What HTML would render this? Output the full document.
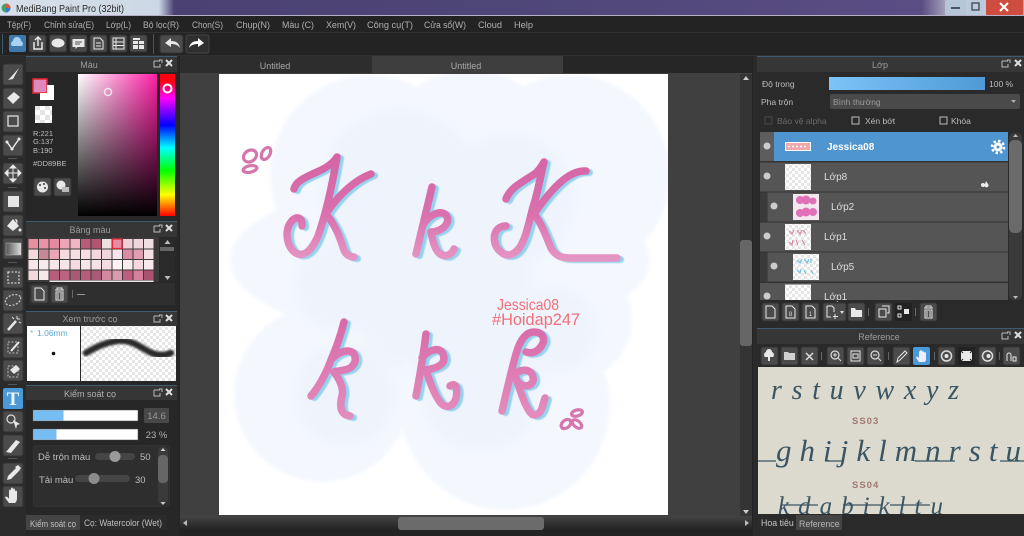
<!DOCTYPE html>
<html><head><meta charset="utf-8">
<style>
html,body{margin:0;padding:0;background:#222;width:1024px;height:536px;overflow:hidden}
svg{display:block;filter:blur(.35px)}
text{font-family:"Liberation Sans","Noto Sans CJK SC",sans-serif;font-size:9px;fill:#bdbdbd}
.m{font-size:9px;fill:#b0b0b0}
.c{text-anchor:middle}
.b{fill:#4b4b4b;stroke:#333;stroke-width:1}
.i{fill:none;stroke:#e8e8e8;stroke-width:1.5}
.w{fill:#e8e8e8}
.p{fill:none;stroke:url(#pk);stroke-width:7.5;stroke-linecap:round;stroke-linejoin:round}
.p2{fill:none;stroke:url(#pk2);stroke-width:7.5;stroke-linecap:round;stroke-linejoin:round}
.s{fill:none;stroke:#93d3f0;stroke-width:7;stroke-linecap:round;stroke-linejoin:round}
.f{fill:none;stroke:#d576ad;stroke-width:3.200}
.sc{font-family:"Liberation Serif",serif;font-style:italic;fill:#3a5563}
</style></head><body>
<svg width="1024" height="536" viewBox="0 0 1024 536" xmlns="http://www.w3.org/2000/svg">
<defs>
<linearGradient id="tb" x1="0" x2="1" y1="0" y2="0"><stop offset="0" stop-color="#d6e0ea"/><stop offset=".155" stop-color="#cdd8e6"/><stop offset=".17" stop-color="#4b4272"/><stop offset=".5" stop-color="#4f4678"/><stop offset=".9" stop-color="#5a4d85"/><stop offset=".925" stop-color="#a9a6bd"/></linearGradient>
<linearGradient id="sv1" x1="0" x2="1" y1="0" y2="0"><stop offset="0" stop-color="#fff"/><stop offset="1" stop-color="#ff1fa6"/></linearGradient>
<linearGradient id="sv2" x1="0" x2="0" y1="0" y2="1"><stop offset="0" stop-color="#000" stop-opacity="0"/><stop offset="1" stop-color="#000"/></linearGradient>
<linearGradient id="hue" x1="0" x2="0" y1="0" y2="1"><stop offset="0" stop-color="#f01"/><stop offset=".05" stop-color="#f01"/><stop offset=".17" stop-color="#f0f"/><stop offset=".36" stop-color="#00f"/><stop offset=".52" stop-color="#0ff"/><stop offset=".68" stop-color="#0f0"/><stop offset=".85" stop-color="#ff0"/><stop offset="1" stop-color="#f00"/></linearGradient>
<linearGradient id="op" x1="0" x2="1" y1="0" y2="0"><stop offset="0" stop-color="#7cc4f8"/><stop offset="1" stop-color="#4f9ad6"/></linearGradient>
<linearGradient id="gr" x1="0" x2="1" y1="0" y2="0"><stop offset="0" stop-color="#555"/><stop offset="1" stop-color="#ddd"/></linearGradient>
<linearGradient id="sb" x1="0" x2="0" y1="0" y2="1"><stop offset="0" stop-color="#444"/><stop offset="1" stop-color="#222"/></linearGradient>
<linearGradient id="pk" gradientUnits="userSpaceOnUse" x1="0" x2="0" y1="157" y2="260"><stop offset="0" stop-color="#d565a6"/><stop offset=".55" stop-color="#da70ad"/><stop offset="1" stop-color="#e596c4"/></linearGradient>
<linearGradient id="pk2" gradientUnits="userSpaceOnUse" x1="0" x2="0" y1="322" y2="418"><stop offset="0" stop-color="#d96aa9"/><stop offset="1" stop-color="#e38dbd"/></linearGradient>
<pattern id="ck" width="10" height="10" patternUnits="userSpaceOnUse"><rect width="10" height="10" fill="#fff"/><rect width="5" height="5" fill="#e4e4e4"/><rect x="5" y="5" width="5" height="5" fill="#e4e4e4"/></pattern>
<pattern id="ck2" width="6" height="6" patternUnits="userSpaceOnUse"><rect width="6" height="6" fill="#fff"/><rect width="3" height="3" fill="#e6e6e6"/><rect x="3" y="3" width="3" height="3" fill="#e6e6e6"/></pattern>
<filter id="n" x="0" y="0" width="100%" height="100%"><feTurbulence type="fractalNoise" baseFrequency=".8" numOctaves="2" seed="4"/><feColorMatrix values="0 0 0 0 .45 0 0 0 0 .43 0 0 0 0 .36 0 0 0 .5 -.1"/></filter>
<filter id="bl"><feGaussianBlur stdDeviation="1"/></filter>
<filter id="bl5"><feGaussianBlur stdDeviation=".5"/></filter>
<filter id="bl3"><feGaussianBlur stdDeviation="1.500"/></filter>
<filter id="bl8"><feGaussianBlur stdDeviation="8"/></filter>
</defs>

<rect width="1024" height="536" fill="#232323"/>
<!-- title -->
<rect width="1024" height="16" fill="url(#tb)"/>
<rect y="15" width="1024" height="1" fill="#b5b0c8"/>
<circle cx="6" cy="8" r="4.5" fill="#39a86a"/><path d="M6 3.5a4.5 4.5 0 0 1 4.5 4.5H6z" fill="#e4573f"/><path d="M6 8h4.5A4.5 4.5 0 0 1 6 12.5z" fill="#3b78c8"/>
<text x="16" y="12" textLength="108" lengthAdjust="spacingAndGlyphs" style="font-size:10.2px;fill:#2a2a2a">MediBang Paint Pro (32bit)</text>
<rect x="945" y="0" width="21" height="15" rx="1" fill="#b5c6d8"/><rect x="966" y="0" width="20" height="15" fill="#bccbdc"/><rect x="986" y="0" width="37" height="15" rx="1" fill="#cf4d40"/>
<rect x="951" y="7" width="9" height="2" fill="#4a5568"/><rect x="972" y="3" width="7" height="7" fill="none" stroke="#4a5568" stroke-width="1.5"/>
<path d="M1000 3l8 8M1008 3l-8 8" stroke="#fff" stroke-width="2"/>

<!-- menu -->
<rect y="32" width="1024" height="1" fill="#303030"/>
<text class="m" x="7" y="28" textLength="24" lengthAdjust="spacingAndGlyphs">Tệp(F)</text><text class="m" x="44" y="28" textLength="50" lengthAdjust="spacingAndGlyphs">Chỉnh sửa(E)</text><text class="m" x="106" y="28" textLength="25" lengthAdjust="spacingAndGlyphs">Lớp(L)</text><text class="m" x="143" y="28" textLength="36" lengthAdjust="spacingAndGlyphs">Bộ lọc(R)</text><text class="m" x="192" y="28" textLength="31" lengthAdjust="spacingAndGlyphs">Chọn(S)</text><text class="m" x="236" y="28" textLength="34" lengthAdjust="spacingAndGlyphs">Chụp(N)</text><text class="m" x="282" y="28" textLength="32" lengthAdjust="spacingAndGlyphs">Màu (C)</text><text class="m" x="326" y="28" textLength="30" lengthAdjust="spacingAndGlyphs">Xem(V)</text><text class="m" x="367" y="28" textLength="46" lengthAdjust="spacingAndGlyphs">Công cụ(T)</text><text class="m" x="424" y="28" textLength="42" lengthAdjust="spacingAndGlyphs">Cửa sổ(W)</text><text class="m" x="478" y="28" textLength="24" lengthAdjust="spacingAndGlyphs">Cloud</text><text class="m" x="514" y="28" textLength="19" lengthAdjust="spacingAndGlyphs">Help</text>

<!-- toolbar -->
<rect y="55" width="1024" height="1" fill="#303030"/>
<rect x="2" y="34" width="1" height="20" fill="#3a5a70"/><rect x="153" y="34" width="1" height="20" fill="#3a5a70"/>
<rect x="9" y="35" width="17" height="17" rx="2" fill="#3f78ab"/>
<path d="M12 46a3 3 0 0 1 1-5 4 4 0 0 1 8 0 3 3 0 0 1 1 5z" fill="#a7d2f4"/>
<rect class="b" x="29" y="35" width="17" height="17" rx="2"/><path d="M34 42v7h8v-7M38 46v-9M35 40l3-3 3 3" class="i"/>
<rect class="b" x="49.500" y="35" width="17" height="17" rx="2"/><ellipse cx="58" cy="43" rx="6.500" ry="4.500" class="w"/>
<rect class="b" x="70" y="35" width="17" height="17" rx="2"/><path d="M72.500 39h12v8h-7l-2 2v-2h-3z" class="w"/><path d="M75 42h7M75 44h5" stroke="#555"/>
<rect class="b" x="90" y="35" width="17" height="17" rx="2"/><path d="M94 38h6l3 3v8h-9zM96 43h5M96 46h5" class="i" style="stroke-width:1"/>
<rect class="b" x="110" y="35" width="17" height="17" rx="2"/><path d="M113 38h11v11h-11zM113 42h11M113 45.500h11M116 38v11" class="i" style="stroke-width:1"/>
<rect class="b" x="130" y="35" width="17" height="17" rx="2"/><path d="M133 41h5v3h-5zM139 41h5v3h-5zM133 45h5v4h-5zM139 45h5v4h-5zM133 38h7v2h-7z" class="w"/>
<rect class="b" x="160" y="35" width="23" height="18" rx="2"/><path d="M165 43l6-5v3c5 0 8 2 9 7-2-3-5-4-9-4v3z" class="w"/>
<rect x="186" y="35" width="23" height="18" rx="2" fill="#2f2f2f" stroke="#444"/><path d="M204 43l-6-5v3c-5 0-8 2-9 7 2-3 5-4 9-4v3z" fill="#fff"/>

<!-- tool column -->
<rect x="0" y="56" width="26" height="480" fill="#2b2b2b"/>
<g>
<rect class="b" x="3" y="64" width="20" height="21" rx="2"/><path d="M8 80l3-3 8-9-6 11z" class="w"/>
<rect class="b" x="3" y="88" width="20" height="21" rx="2"/><path d="M7 98l7-6 6 5-7 7z" class="w"/>
<rect class="b" x="3" y="111" width="20" height="21" rx="2"/><rect x="8" y="116" width="10" height="10" fill="none" stroke="#ddd" stroke-width="1.300"/>
<rect class="b" x="3" y="135" width="20" height="21" rx="2"/><path d="M7 142l5 7 7-10" class="i"/><circle cx="7" cy="142" r="1.500" class="w"/><circle cx="12" cy="149" r="1.500" class="w"/><circle cx="19" cy="139" r="1.500" class="w"/>
<rect x="8" y="158" width="9" height="1" fill="#555"/>
<rect class="b" x="3" y="163" width="20" height="21" rx="2"/><path d="M13 165v17M5 173h16M13 165l-3 3h6zM13 182l-3-3h6zM5 173l3-3v6zM21 173l-3-3v6z" class="w" stroke="#e8e8e8" stroke-width="1"/>
<rect x="8" y="187" width="9" height="1" fill="#555"/>
<rect class="b" x="3" y="191" width="20" height="21" rx="2"/><rect x="8" y="196" width="11" height="11" fill="#e6e6e6"/>
<rect class="b" x="3" y="215" width="20" height="21" rx="2"/><path d="M7 226l6-7 6 7-6 5zM15 219c3 0 3 3 2 5" class="w"/><circle cx="20" cy="230" r="1.500" class="w"/>
<rect class="b" x="3" y="238" width="20" height="21" rx="2"/><rect x="6" y="243" width="15" height="12" fill="url(#gr)" stroke="#bbb" stroke-width=".5"/>
<rect x="8" y="262" width="9" height="1" fill="#555"/>
<rect class="b" x="3" y="267" width="20" height="21" rx="2"/><rect x="8" y="272" width="11" height="11" fill="none" stroke="#ccc" stroke-width="1.300" stroke-dasharray="2 1.500"/>
<rect class="b" x="3" y="290" width="20" height="21" rx="2"/><ellipse cx="13" cy="300" rx="8" ry="5" transform="rotate(-20 13 300)" fill="none" stroke="#ccc" stroke-width="1.200" stroke-dasharray="2 1.500"/>
<rect class="b" x="3" y="313" width="20" height="21" rx="2"/><path d="M8 330l8-9" stroke="#e8e8e8" stroke-width="2.500"/><path d="M17 316v3M20 319h-3M14 319l-2-2M19 322l2 1" stroke="#ddd"/>
<rect class="b" x="3" y="337" width="20" height="21" rx="2"/><rect x="8" y="342" width="10" height="11" fill="none" stroke="#bbb" stroke-dasharray="2 1.500"/><path d="M11 351l8-9" stroke="#eee" stroke-width="2"/>
<rect class="b" x="3" y="360" width="20" height="21" rx="2"/><rect x="8" y="366" width="10" height="11" fill="none" stroke="#bbb" stroke-dasharray="2 1.500"/><path d="M10 370l6-5 4 4-6 5z" class="w"/>
<rect x="8" y="384" width="9" height="1" fill="#555"/>
<rect x="3" y="388" width="20" height="21" rx="2" fill="#4a9ad8"/><text x="13" y="405" class="c" style="font-family:'Liberation Serif',serif;font-size:19px;font-weight:bold;fill:#eef6fc">T</text>
<rect class="b" x="3" y="411" width="20" height="21" rx="2"/><circle cx="11" cy="419" r="4" fill="none" stroke="#ddd" stroke-width="1.200"/><path d="M13 420l7 4-3 1-1 4z" class="w"/>
<rect class="b" x="3" y="435" width="20" height="21" rx="2"/><path d="M6 452l10-12 4 2-9 11z" class="w"/>
<rect x="8" y="458" width="9" height="1" fill="#555"/>
<rect class="b" x="3" y="463" width="20" height="21" rx="2"/><path d="M7 480l1-4 8-8 3 3-8 8zM15 467l3-2 3 3-2 3z" class="w"/>
<rect class="b" x="3" y="486" width="20" height="21" rx="2"/><path d="M9 503c-2-3-4-5-4-6 1-1 3 0 4 2v-8c0-2 2-2 2 0v5-7c0-2 2-2 2 0v7-6c0-2 2-2 2 0v6-4c0-2 2-2 2 0v6c0 3-1 4-2 5z" class="w"/>
</g>

<!-- left panels -->
<rect x="26" y="56" width="153" height="480" fill="#272727"/>
<rect x="26" y="56" width="151" height="1" fill="#3d5c70"/>
<rect x="26" y="57" width="151" height="15" fill="#363636"/>
<text x="89" y="68" class="c" style="fill:#9c9c9c">Màu</text>
<path d="M154 61h6M154 61v6h6v-3M159 60l3 0v3" fill="none" stroke="#bbb"/><path d="M166 60l6 6M172 60l-6 6" stroke="#ddd" stroke-width="2"/>
<rect x="33" y="79" width="14" height="14" fill="#dd89be" stroke="#e6262e" stroke-width="1.500"/>
<path d="M47 85h7v15H40v-7h7z" fill="#fff"/>
<rect x="35" y="106" width="17" height="17" fill="url(#ck)"/>
<text x="33" y="136" style="font-size:7.500px">R:221</text><text x="33" y="144" style="font-size:7.500px">G:137</text><text x="33" y="153" style="font-size:7.500px">B:190</text>
<text x="33" y="166" style="font-size:7.500px">#DD89BE</text>
<rect x="78" y="74" width="79" height="142" fill="url(#sv1)"/><rect x="78" y="74" width="79" height="142" fill="url(#sv2)"/>
<circle cx="108" cy="92" r="3.500" fill="none" stroke="#f4e6f0" stroke-width="1.500"/>
<rect x="160" y="74" width="15" height="142" fill="url(#hue)"/>
<circle cx="167.500" cy="88.500" r="4" fill="none" stroke="#fff" stroke-width="2"/>
<rect class="b" x="34" y="178" width="17" height="18" rx="2"/><circle cx="42.500" cy="187" r="5.500" class="w"/><circle cx="40" cy="185" r="1" fill="#333"/><circle cx="44" cy="184" r="1" fill="#333"/><circle cx="45" cy="188" r="1" fill="#333"/>
<rect class="b" x="54" y="178" width="17" height="18" rx="2"/><circle cx="61" cy="185" r="4.500" class="w"/><rect x="62" y="187" width="7" height="5" fill="#bbb"/>

<rect x="26" y="221" width="151" height="1" fill="#3d5c70"/>
<rect x="26" y="222" width="151" height="15" fill="#363636"/>
<text x="90" y="233" class="c" style="fill:#9c9c9c">Bảng màu</text>
<path d="M154 226h6M154 226v6h6v-3M159 225l3 0v3" fill="none" stroke="#bbb"/><path d="M166 225l6 6M172 225l-6 6" stroke="#ddd" stroke-width="2"/>
<rect x="27" y="237" width="132" height="45" fill="#3a3a3a"/>
<g>
<rect x="28.500" y="239" width="9.500" height="9.500" fill="#e8909f"/><rect x="39" y="239" width="9.500" height="9.500" fill="#e893a6"/><rect x="49.500" y="239" width="9.500" height="9.500" fill="#e58aa0"/><rect x="60" y="239" width="9.500" height="9.500" fill="#eca5b6"/><rect x="70.500" y="239" width="9.500" height="9.500" fill="#f0b6c4"/><rect x="81" y="239" width="9.500" height="9.500" fill="#b85c7a"/><rect x="91.500" y="239" width="9.500" height="9.500" fill="#b05672"/><rect x="102" y="239" width="9.500" height="9.500" fill="#ece0e0"/><rect x="112.500" y="239" width="9.500" height="9.500" fill="#e88aa8" stroke="#e02a30" stroke-width="1.300"/><rect x="123" y="239" width="9.500" height="9.500" fill="#efd0d8"/><rect x="133.500" y="239" width="9.500" height="9.500" fill="#efd5dc"/><rect x="144" y="239" width="9.500" height="9.500" fill="#efdfe3"/>
<rect x="28.500" y="249.500" width="9.500" height="9.500" fill="#f3d8dc"/><rect x="39" y="249.500" width="9.500" height="9.500" fill="#c58a98"/><rect x="49.500" y="249.500" width="9.500" height="9.500" fill="#eba6b5"/><rect x="60" y="249.500" width="9.500" height="9.500" fill="#f5dbe0"/><rect x="70.500" y="249.500" width="9.500" height="9.500" fill="#f5dfe3"/><rect x="81" y="249.500" width="9.500" height="9.500" fill="#f5dde3"/><rect x="91.500" y="249.500" width="9.500" height="9.500" fill="#f3d5dc"/><rect x="102" y="249.500" width="9.500" height="9.500" fill="#efd5dc"/><rect x="112.500" y="249.500" width="9.500" height="9.500" fill="#f8e4ea"/><rect x="123" y="249.500" width="9.500" height="9.500" fill="#dc8ca4"/><rect x="133.500" y="249.500" width="9.500" height="9.500" fill="#e09eb2"/><rect x="144" y="249.500" width="9.500" height="9.500" fill="#f3dfe3"/>
<rect x="28.500" y="260" width="9.500" height="9.500" fill="#f7e6e8"/><rect x="39" y="260" width="9.500" height="9.500" fill="#f8eaec"/><rect x="49.500" y="260" width="9.500" height="9.500" fill="#f7e6e9"/><rect x="60" y="260" width="9.500" height="9.500" fill="#f6e5e8"/><rect x="70.500" y="260" width="9.500" height="9.500" fill="#f4dbe0"/><rect x="81" y="260" width="9.500" height="9.500" fill="#f6e5e8"/><rect x="91.500" y="260" width="9.500" height="9.500" fill="#f5e2e6"/><rect x="102" y="260" width="9.500" height="9.500" fill="#f4dde2"/><rect x="112.500" y="260" width="9.500" height="9.500" fill="#fdf3f5"/><rect x="123" y="260" width="9.500" height="9.500" fill="#faecef"/><rect x="133.500" y="260" width="9.500" height="9.500" fill="#f5d8e0"/><rect x="144" y="260" width="9.500" height="9.500" fill="#f7e8eb"/>
<rect x="28.500" y="270.500" width="9.500" height="9.500" fill="#f3d8dc"/><rect x="39" y="270.500" width="9.500" height="9.500" fill="#f7e8ea"/><rect x="49.500" y="270.500" width="9.500" height="9.500" fill="#b95c7c"/><rect x="60" y="270.500" width="9.500" height="9.500" fill="#bb6480"/><rect x="70.500" y="270.500" width="9.500" height="9.500" fill="#a85a74"/><rect x="81" y="270.500" width="9.500" height="9.500" fill="#b85c7c"/><rect x="91.500" y="270.500" width="9.500" height="9.500" fill="#a85a76"/><rect x="102" y="270.500" width="9.500" height="9.500" fill="#d38aa0"/><rect x="112.500" y="270.500" width="9.500" height="9.500" fill="#dd9bb0"/><rect x="123" y="270.500" width="9.500" height="9.500" fill="#c05c80"/><rect x="133.500" y="270.500" width="9.500" height="9.500" fill="#d5809c"/><rect x="144" y="270.500" width="9.500" height="9.500" fill="#ab5270"/>
<rect x="49.500" y="280.500" width="104" height="1.500" fill="#f2e8ea"/>
</g>
<rect x="160" y="238" width="15" height="44" fill="#2a2a2a"/>
<path d="M167.500 240l-3 4h6zM167.500 280l-3-4h6z" fill="#bbb"/><rect x="160" y="247" width="14" height="4" fill="#666"/>
<rect x="29" y="283" width="146" height="22" fill="#2f2f2f"/>
<rect class="b" x="31" y="285" width="17" height="18" rx="2"/><path d="M35 288h6l3 3v9h-9z" class="i" style="stroke-width:1"/>
<rect class="b" x="51" y="285" width="17" height="18" rx="2"/><path d="M55 290h9M57 290v-2h5v2M56 292h7v8h-7zM58 293v6M61 293v6" class="i" style="stroke-width:1"/>
<rect x="72" y="290" width="1" height="8" fill="#666"/>
<rect x="77" y="294" width="8" height="1" fill="#999"/>

<rect x="26" y="311" width="151" height="1" fill="#3d5c70"/>
<rect x="26" y="312" width="151" height="14" fill="#363636"/>
<text x="90" y="322" class="c" style="fill:#9c9c9c">Xem trước cọ</text>
<path d="M154 316h6M154 316v6h6v-3M159 315l3 0v3" fill="none" stroke="#bbb"/><path d="M166 315l6 6M172 315l-6 6" stroke="#ddd" stroke-width="2"/>
<rect x="27" y="326" width="53" height="55" fill="#fff"/>
<rect x="81" y="326" width="95" height="55" fill="url(#ck2)"/>
<text x="30" y="336" style="font-size:8px;fill:#7fb4d8">*</text><text x="37" y="336" style="font-size:8.500px;fill:#5fa4d4">1.06mm</text>
<circle cx="53.500" cy="353.500" r="1.800" fill="#111"/>
<path d="M86 353c8-5 18-10 30-12 12-2 20 3 30 9 8 5 16 7 25 3" fill="none" stroke="#2a2a2a" stroke-width="6.500" stroke-linecap="round" filter="url(#bl)"/>

<rect x="26" y="385" width="151" height="1" fill="#3d5c70"/>
<rect x="26" y="386" width="151" height="14" fill="#363636"/>
<text x="90" y="397" class="c" style="fill:#b0b0b0">Kiểm soát cọ</text>
<path d="M154 390h6M154 390v6h6v-3M159 389l3 0v3" fill="none" stroke="#bbb"/><path d="M166 389l6 6M172 389l-6 6" stroke="#ddd" stroke-width="2"/>
<rect x="33" y="410" width="105" height="11" fill="#fff" stroke="#444" stroke-width=".5"/><rect x="33.500" y="410.500" width="30" height="10" fill="#76bdf4"/>
<rect x="144" y="408" width="25" height="15" rx="1" fill="#484848"/><text x="156.500" y="419" class="c" style="font-size:9.500px;fill:#999">14.6</text>
<rect x="33" y="429" width="105" height="11" fill="#fff" stroke="#444" stroke-width=".5"/><rect x="33.500" y="429.500" width="23" height="10" fill="#76bdf4"/>
<text x="156.500" y="438" class="c" style="font-size:9.500px;fill:#b0b0b0">23 %</text>
<rect x="33.500" y="445.500" width="136" height="61" rx="2" fill="#2e2e2e" stroke="#333"/>
<text x="38" y="460" style="font-size:9.500px">Dễ trộn màu</text>
<rect x="95" y="453" width="40" height="7" rx="3.500" fill="#454545"/><circle cx="115" cy="456.500" r="5.500" fill="#9a9a9a"/>
<text x="140" y="460" style="font-size:9.500px">50</text>
<text x="39" y="483" style="font-size:9.500px">Tải màu</text>
<rect x="75" y="475" width="55" height="7" rx="3.500" fill="#454545"/><circle cx="94" cy="478.500" r="5.500" fill="#8c8c8c"/>
<text x="135" y="483" style="font-size:9.500px">30</text>
<rect x="158" y="447" width="10" height="57" rx="4" fill="#3a3a3a"/><rect x="158" y="455" width="10" height="28" rx="4" fill="#666"/>
<path d="M163 448l-2.500 3h5zM163 505l-2.500-3h5z" fill="#ccc"/>
<rect x="26" y="515" width="54" height="15" fill="#444"/>
<text x="30" y="527" textLength="46" lengthAdjust="spacingAndGlyphs" style="font-size:8.800px;fill:#c0c0c0">Kiểm soát cọ</text>
<rect x="80" y="515" width="87" height="15" fill="#2b2b2b"/>
<text x="84" y="526" textLength="78" lengthAdjust="spacingAndGlyphs" style="font-size:8.800px;fill:#c0c0c0">Cọ: Watercolor (Wet)</text>

<!-- centre -->
<rect x="180" y="56" width="572" height="474" fill="#404040"/>
<rect x="180" y="56" width="192" height="17" fill="#2d2d2d"/>
<rect x="372" y="56" width="191" height="17" fill="#3e3e3e"/>
<rect x="563" y="56" width="189" height="17" fill="#262626"/>
<text x="275" y="69" class="c" style="fill:#a8a8a8">Untitled</text>
<text x="466" y="69" class="c" style="fill:#a8a8a8">Untitled</text>
<svg x="219" y="74" width="449" height="441" viewBox="219 74 449 441">
<rect x="219" y="74" width="449" height="441" fill="#fff"/>
<g fill="#f4f8fe" filter="url(#bl3)">
<circle cx="370" cy="175" r="100"/><circle cx="470" cy="165" r="95"/><circle cx="570" cy="175" r="100"/><circle cx="330" cy="170" r="55"/>
<ellipse cx="440" cy="260" rx="210" ry="80"/>
<circle cx="322" cy="394" r="88"/><circle cx="505" cy="405" r="105"/><circle cx="570" cy="320" r="62"/>
</g>
<g fill="#eef3fc" filter="url(#bl8)">
<circle cx="400" cy="190" r="80"/><circle cx="510" cy="200" r="65"/><circle cx="440" cy="285" r="90"/><circle cx="340" cy="285" r="45"/><circle cx="555" cy="330" r="42"/><circle cx="345" cy="395" r="50"/><circle cx="480" cy="390" r="60"/>
</g>
<g transform="translate(3.500 1.500)" filter="url(#bl5)">
<path class="s" d="M294 189C296 180 309 176 319 171C328 167 334 162 337 157C333 180 326 214 318 236C312 250 305 256 298 254C288 251 283 232 291 222C295 216 303 216 302 226"/>
<path class="s" d="M371 174C355 180 338 195 326 214C336 226 340 238 344 250C346 255 350 257 354 257"/>
<path class="s" d="M432 187L416 254M423 225C428 216 440 209 446 215C451 222 444 231 431 232C433 242 435 250 440 254C446 258 452 254 454 249"/>
<path class="s" d="M506 199C510 188 522 182 533 175C538 172 541 167 544 162C540 178 538 192 533 207C529 222 526 238 520 247C514 256 506 257 501 252C493 246 492 233 499 228C502 226 504 226 506 226"/>
<path class="s" d="M586 171C572 170 556 182 534 214C542 224 546 236 551 248C555 255 560 258 570 258H617"/>
<path class="s" d="M344 322C340 338 336 348 331 360C326 374 318 388 311 396M333 358C338 352 350 348 354 354C358 362 352 369 344 370C340 371 336 371 334 372C340 380 344 388 342 396C340 404 340 412 346 415L350 416"/>
<path class="s" d="M426 334C424 350 420 375 416 396M422 358C428 350 440 346 443 354C447 364 438 368 426 370C430 382 434 394 440 402C446 410 454 406 456 398C458 388 456 382 450 386"/>
<path class="s" d="M502 411C508 385 512 368 516 354C520 340 526 332 534 332C542 332 546 338 542 345C538 352 532 354 526 352M510 378C516 372 526 366 532 374C536 382 530 388 522 385C518 383 516 380 516 378C520 390 524 404 530 412C534 418 540 414 542 408L545 398"/>
</g>
<g>
<path class="p" d="M371 174C355 180 338 195 326 214C336 226 340 238 344 250C346 255 350 257 354 257"/>
<path class="p" d="M294 189C296 180 309 176 319 171C328 167 334 162 337 157C333 180 326 214 318 236C312 250 305 256 298 254C288 251 283 232 291 222C295 216 303 216 302 226"/>
<path class="p" d="M432 187L416 254M423 225C428 216 440 209 446 215C451 222 444 231 431 232C433 242 435 250 440 254C446 258 452 254 454 249"/>
<path class="p" d="M586 171C572 170 556 182 534 214C542 224 546 236 551 248C555 255 560 258 570 258H617"/>
<path class="p" d="M506 199C510 188 522 182 533 175C538 172 541 167 544 162C540 178 538 192 533 207C529 222 526 238 520 247C514 256 506 257 501 252C493 246 492 233 499 228C502 226 504 226 506 226"/>
<path class="p2" d="M344 322C340 338 336 348 331 360C326 374 318 388 311 396M333 358C338 352 350 348 354 354C358 362 352 369 344 370C340 371 336 371 334 372C340 380 344 388 342 396C340 404 340 412 346 415L350 416"/>
<path class="p2" d="M426 334C424 350 420 375 416 396M422 358C428 350 440 346 443 354C447 364 438 368 426 370C430 382 434 394 440 402C446 410 454 406 456 398C458 388 456 382 450 386"/>
<path class="p2" d="M502 411C508 385 512 368 516 354C520 340 526 332 534 332C542 332 546 338 542 345C538 352 532 354 526 352M510 378C516 372 526 366 532 374C536 382 530 388 522 385C518 383 516 380 516 378C520 390 524 404 530 412C534 418 540 414 542 408L545 398"/>
</g>
<ellipse class="f" cx="250" cy="156" rx="7" ry="5.500" transform="rotate(-35 250 156)"/><ellipse class="f" cx="266" cy="153.500" rx="4" ry="6.500" transform="rotate(30 266 153.500)"/><ellipse class="f" cx="250" cy="169" rx="7" ry="3.200" transform="rotate(-12 250 169)"/>
<ellipse class="f" cx="577" cy="413" rx="5.500" ry="3" transform="rotate(-15 577 413)"/><ellipse class="f" cx="566" cy="424" rx="5.500" ry="3.800" transform="rotate(-40 566 424)"/><ellipse class="f" cx="577" cy="424" rx="5.500" ry="3.200" transform="rotate(40 577 424)"/>
<text x="497" y="310" textLength="62" lengthAdjust="spacingAndGlyphs" style="font-size:16px;fill:#f36f78">Jessica08</text>
<text x="492" y="325" textLength="88" lengthAdjust="spacingAndGlyphs" style="font-size:17px;fill:#f36f78">#Hoidap247</text>
</svg>
<!-- scrollbars -->
<rect x="740" y="74" width="12" height="442" fill="#343434"/>
<rect x="740" y="240" width="12" height="106" rx="3" fill="#666"/>
<path d="M746 76l-3 4h6zM746 514l-3-4h6z" fill="#ccc"/>
<rect x="180" y="516" width="572" height="14" fill="url(#sb)"/>
<rect x="398" y="517" width="146" height="13" rx="3" fill="#6b6b6b"/>
<path d="M183 523l4-3v6zM749 523l-4-3v6z" fill="#bbb"/>

<!-- right panels -->
<rect x="753" y="56" width="271" height="480" fill="#2a2a2a"/>
<rect x="757" y="56" width="267" height="1" fill="#3d5c70"/>
<rect x="757" y="57" width="267" height="15" fill="#363636"/>
<text x="880" y="68" class="c" style="fill:#9c9c9c">Lớp</text>
<path d="M1002 61h6M1002 61v6h6v-3M1007 60l3 0v3" fill="none" stroke="#bbb"/><path d="M1015 60l6 6M1021 60l-6 6" stroke="#ddd" stroke-width="2"/>
<text x="762" y="87" style="font-size:8.500px">Độ trong</text>
<rect x="829" y="77" width="156" height="13" fill="url(#op)"/>
<text x="989" y="87" style="font-size:8.500px">100 %</text>
<text x="761" y="105" style="font-size:8.500px">Pha trộn</text>
<rect x="830" y="94" width="190" height="15" rx="2" fill="#4a4a4a"/>
<text x="833" y="105" style="font-size:8.500px;fill:#9a9a9a">Bình thường</text>
<path d="M1011 100l5 0-2.500 3z" fill="#aaa"/>
<rect x="765" y="117" width="7" height="7" fill="none" stroke="#4a4a4a"/><text x="777" y="124" style="font-size:8.500px;fill:#6a6a6a">Bảo vệ alpha</text>
<rect x="852" y="117" width="7" height="7" fill="none" stroke="#bbb"/><text x="865" y="124" style="font-size:8.500px">Xén bớt</text>
<rect x="940" y="117" width="7" height="7" fill="none" stroke="#bbb"/><text x="951" y="124" style="font-size:8.500px">Khóa</text>

<rect x="760" y="132" width="248" height="168" fill="#333"/>
<rect x="760" y="132" width="14" height="29" fill="#5d5d5d"/><rect x="774" y="132" width="234" height="29" fill="#4f96d0"/>
<circle cx="767" cy="146" r="3.500" fill="#ccc"/>
<rect x="785" y="142" width="26" height="9" fill="#fff"/><rect x="786" y="143" width="24" height="7" fill="#efa9ae"/>
<path d="M788 146.500h20" stroke="#fff" stroke-width="1.500" stroke-dasharray="2 2"/>
<text x="827" y="150" style="font-size:10px;font-weight:bold;fill:#fff">Jessica08</text>
<circle cx="998" cy="147" r="4.500" fill="#fff"/><circle cx="998" cy="147" r="6" fill="none" stroke="#fff" stroke-width="2.500" stroke-dasharray="2.400 2.300"/><circle cx="998" cy="147" r="1.500" fill="#4f96d0"/>

<rect x="760" y="162.500" width="248" height="29" fill="#555"/>
<circle cx="767" cy="176" r="3.500" fill="#ccc"/>
<rect x="785" y="164" width="26" height="26" fill="url(#ck2)"/>
<text x="824" y="180" style="font-size:10px;fill:#ddd">Lớp8</text>
<circle cx="983" cy="185" r="2" fill="#eee"/><path d="M986 181l2 3a2 2 0 1 1-3 0z" fill="#eee"/>

<rect x="760" y="192.500" width="7" height="29" fill="#3a3a3a"/><rect x="767.500" y="192.500" width="240.500" height="29" fill="#555"/>
<circle cx="774" cy="206" r="3.500" fill="#ccc"/>
<rect x="793" y="194" width="26" height="26" fill="#f4e8f0"/>
<g fill="#e070b8"><circle cx="800" cy="200" r="4"/><circle cx="806" cy="200" r="4.500"/><circle cx="813" cy="201" r="3.500"/><circle cx="800" cy="213" r="4"/><circle cx="806" cy="212" r="4.500"/><circle cx="813" cy="212" r="4"/></g>
<text x="831" y="210" style="font-size:10px;fill:#ddd">Lớp2</text>

<rect x="760" y="222.500" width="248" height="29" fill="#555"/>
<circle cx="767" cy="236" r="3.500" fill="#ccc"/>
<rect x="785" y="224" width="26" height="26" fill="url(#ck2)"/>
<path d="M789 231l3 3 2-4M797 230l3 4 2-4M803 230l3 4M789 242l3 3 1-5M796 240l2 5M802 240l3 5" fill="none" stroke="#d88fa8" stroke-width="1.300"/>
<text x="824" y="240" style="font-size:10px;fill:#ddd">Lớp1</text>

<rect x="760" y="252.500" width="7" height="29" fill="#3a3a3a"/><rect x="767.500" y="252.500" width="240.500" height="29" fill="#555"/>
<circle cx="774" cy="266" r="3.500" fill="#ccc"/>
<rect x="793" y="254" width="26" height="26" fill="url(#ck2)"/>
<path d="M797 260l3 3 2-4M804 259l3 4 2-4M811 259v4M797 270l3 3 1-4M804 270l2 4M811 270l2 4" fill="none" stroke="#78c4e4" stroke-width="1.300"/>
<text x="831" y="270" style="font-size:10px;fill:#ddd">Lớp5</text>

<rect x="760" y="283" width="248" height="17" fill="#555"/>
<circle cx="767" cy="296" r="3.500" fill="#ccc"/>
<rect x="785" y="284.500" width="26" height="15.500" fill="url(#ck2)"/>
<text x="824" y="300" style="font-size:10px;fill:#ddd">Lớp1</text>
<rect x="760" y="300" width="250" height="1" fill="#2a2a2a"/>

<rect x="1009" y="133" width="13" height="167" rx="5" fill="#3a3a3a"/><rect x="1009" y="140" width="13" height="93" rx="5" fill="#6a6a6a"/>
<path d="M1015.500 134l-2.500 3h5zM1015.500 299l-2.500-3h5z" fill="#bbb"/>

<g>
<rect class="b" x="762" y="303" width="17" height="18" rx="2"/><path d="M766 306h6l3 3v9h-9z" class="i" style="stroke-width:1"/>
<rect class="b" x="782" y="303" width="17" height="18" rx="2"/><path d="M786 306h6l3 3v9h-9z" class="i" style="stroke-width:1"/><text x="790.500" y="316" class="c" style="font-size:6px;fill:#ddd">8</text>
<rect class="b" x="802" y="303" width="17" height="18" rx="2"/><path d="M806 306h6l3 3v9h-9z" class="i" style="stroke-width:1"/><text x="810.500" y="316" class="c" style="font-size:6px;fill:#ddd">1</text>
<rect class="b" x="823" y="303" width="23" height="18" rx="2"/><path d="M827 306h5l2 2v4M827 306v11h4M835 314v5M833 316.500h5" class="i" style="stroke-width:1"/><path d="M840 311l4 0-2 3z" fill="#ddd"/>
<rect class="b" x="848" y="303" width="17" height="18" rx="2"/><path d="M851 308h4l1 2h6v7h-11z" class="w"/>
<rect x="868" y="308" width="1" height="8" fill="#666"/>
<rect class="b" x="875" y="303" width="17" height="18" rx="2"/><path d="M882 306h7v7h-2M879 309h7v8h-7z" class="i" style="stroke-width:1"/>
<rect x="895" y="303" width="17" height="18" rx="2" fill="#222"/><path d="M898 306h3v3h-3zM898 314h3v3h-3z" class="i" style="stroke-width:1"/><rect x="904" y="309" width="5" height="5" class="w"/>
<rect x="915" y="308" width="1" height="8" fill="#666"/>
<rect class="b" x="920" y="303" width="17" height="18" rx="2"/><path d="M924 308h9M926 308v-2h5v2M925 310h7v8h-7zM927 311v6M930 311v6" class="i" style="stroke-width:1"/>
</g>

<rect x="757" y="328" width="267" height="1" fill="#3d5c70"/>
<rect x="757" y="329" width="267" height="15" fill="#363636"/>
<text x="879" y="340" class="c" style="fill:#9c9c9c">Reference</text>
<path d="M1002 333h6M1002 333v6h6v-3M1007 332l3 0v3" fill="none" stroke="#bbb"/><path d="M1015 332l6 6M1021 332l-6 6" stroke="#ddd" stroke-width="2"/>
<g>
<rect class="b" x="761" y="347" width="17" height="18" rx="2"/><path d="M765 357a3 3 0 0 1 1-5 3 3 0 0 1 6 0 3 3 0 0 1 1 5h-3v4h-2v-4z" class="w"/>
<rect class="b" x="781" y="347" width="17" height="18" rx="2"/><path d="M784 352h4l1 1h6v7h-11z" class="w" style="opacity:.85"/>
<rect class="b" x="801" y="347" width="17" height="18" rx="2"/><path d="M806 353l7 7M813 353l-7 7" stroke="#ddd" stroke-width="1.500"/>
<rect x="821" y="352" width="1" height="8" fill="#666"/>
<rect class="b" x="827" y="347" width="17" height="18" rx="2"/><circle cx="835" cy="355" r="4" fill="none" stroke="#ddd" stroke-width="1.200"/><path d="M838 358l3 3M833 355h4M835 353v4" stroke="#ddd"/>
<rect class="b" x="847" y="347" width="17" height="18" rx="2"/><path d="M851 351h9v10h-9zM853 354h5v4h-5z" class="i" style="stroke-width:1"/>
<rect class="b" x="867" y="347" width="17" height="18" rx="2"/><circle cx="875" cy="355" r="4" fill="none" stroke="#ddd" stroke-width="1.200"/><path d="M878 358l3 3M873 355h4" stroke="#ddd"/>
<rect x="888" y="352" width="1" height="8" fill="#666"/>
<rect class="b" x="893" y="347" width="17" height="18" rx="2"/><path d="M897 362l1-4 7-7 2 2-7 7z" class="i" style="stroke-width:1"/>
<rect x="913" y="347" width="17" height="18" rx="2" fill="#4a9ad8"/><path d="M919 362c-2-3-3-4-3-5 1-1 2 0 3 1v-6c0-1 1-1 1 0v-1c0-1 2-1 2 0v1c0-1 2-1 2 0v1c0-1 2-1 2 0v6c0 2-1 3-2 3z" fill="#eef"/>
<rect x="934" y="352" width="1" height="8" fill="#666"/>
<rect class="b" x="938" y="347" width="17" height="18" rx="2"/><circle cx="946.500" cy="356" r="5" fill="none" stroke="#ddd" stroke-width="1.500"/><circle cx="946.500" cy="356" r="2" class="w"/>
<rect x="958" y="347" width="17" height="18" rx="2" fill="#222"/><path d="M961 351h11v10h-11z" class="w"/><path d="M961 351l2 2M972 351l-2 2M961 361l2-2M972 361l-2-2" stroke="#222"/>
<rect class="b" x="979" y="347" width="17" height="18" rx="2"/><circle cx="987.500" cy="356" r="5" fill="none" stroke="#ddd" stroke-width="1.500"/><circle cx="988.500" cy="356" r="2" class="w"/>
<rect x="999" y="352" width="1" height="8" fill="#666"/>
<rect class="b" x="1003" y="347" width="17" height="18" rx="2"/><path d="M1007 361v-6a2 2 0 0 1 4 0v6M1013 361v-4h3v4z" class="i" style="stroke-width:1"/>
</g>

<!-- reference image -->
<svg x="758" y="367" width="266" height="147" viewBox="758 367 266 147">
<rect x="758" y="367" width="266" height="147" fill="#dedbd0"/>
<rect x="758" y="367" width="266" height="147" filter="url(#n)" opacity=".22"/>
<text class="sc" x="771" y="399" textLength="188" lengthAdjust="spacing" style="font-size:28px">r s t u v w x y z</text>
<text x="852" y="424" style="font-size:9.500px;font-weight:bold;fill:#a07a72;letter-spacing:1px">SS03</text>
<text class="sc" x="776" y="461" textLength="245" lengthAdjust="spacing" style="font-size:31px">g h i j k l m n r s t u</text>
<path d="M758 461h18M825 461h18M915 461h40M1000 461h24" stroke="#3a5563" stroke-width="1.300"/>
<text x="852" y="488" style="font-size:9.500px;font-weight:bold;fill:#a07a72;letter-spacing:1px">SS04</text>
<path d="M782 505h36M843 505h38M890 505h40" stroke="#3a5563" stroke-width="1.300"/>
<text class="sc" x="778" y="514" textLength="165" lengthAdjust="spacing" style="font-size:25px">k d a b i k l t u</text>
</svg>
<rect x="753" y="514" width="271" height="22" fill="#2a2a2a"/>
<rect x="758" y="515" width="36" height="15" fill="#2b2b2b"/>
<text x="761" y="526" style="font-size:8.800px;fill:#c8c8c8">Hoa tiêu</text>
<rect x="796" y="515" width="46" height="15" fill="#454545"/>
<text x="799" y="527" style="font-size:8.800px;fill:#b8b8b8">Reference</text>
</svg>
</body></html>
